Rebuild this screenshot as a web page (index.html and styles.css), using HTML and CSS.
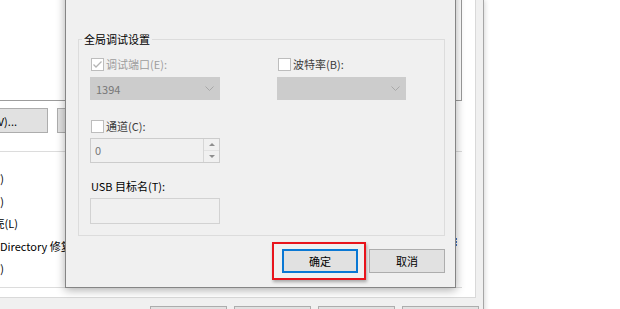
FILE: index.html
```html
<!DOCTYPE html>
<html lang="zh-CN">
<head>
<meta charset="utf-8">
<title>引导高级选项</title>
<link rel="stylesheet" href="styles.css">
</head>
<body>
<div class="screen">
  <div class="propwin">
    <div class="tabpage">
      <div class="tp-main">
        <div class="oslist"></div>
        <div class="optbtns">
          <div class="wbtn adv"><span>高级选项(V)...</span></div>
          <div class="wbtn dflt"></div>
        </div>
        <div class="bootgrp">
          <div class="opt tail w4"><span>安全引导(F)</span></div>
          <div class="opt tail w4"><span>最小(M)</span></div>
          <div class="opt tail w18"><span>其他外壳(L)</span></div>
          <div class="opt split"><span class="pre">Active&nbsp;</span><span>Directory 修复(P)</span></div>
          <div class="opt tail w4"><span>网络(W)</span></div>
        </div>
      </div>
      <div class="tp-side"><span class="dots"></span></div>
    </div>
    <div class="winbtns">
      <div class="wbtn wb"></div>
      <div class="wbtn wb"></div>
      <div class="wbtn wb"></div>
      <div class="wbtn wb"></div>
    </div>
  </div>

  <div class="dialog">
    <fieldset class="grp">
      <legend>全局调试设置</legend>
      <div class="grp-body">
        <label class="chk dis">
          <span class="box"><svg width="11" height="11" viewBox="0 0 11 11"><polyline points="1.5,5.5 4,8 9.5,2.5" fill="none" stroke="#b4b4b4" stroke-width="1.3"/></svg></span>
          <span>调试端口(E):</span>
        </label>
        <label class="chk">
          <span class="box"></span>
          <span>波特率(B):</span>
        </label>
        <div class="combo"><span>1394</span><svg width="9" height="5" viewBox="0 0 9 5"><polyline points="0.5,0.5 4.5,4.5 8.5,0.5" fill="none" stroke="#a8a8a8" stroke-width="1"/></svg></div>
        <div class="combo"><span></span><svg width="9" height="5" viewBox="0 0 9 5"><polyline points="0.5,0.5 4.5,4.5 8.5,0.5" fill="none" stroke="#a8a8a8" stroke-width="1"/></svg></div>
        <label class="chk c1 chan">
          <span class="box"></span>
          <span>通道(C):</span>
        </label>
        <div class="spin c1">
          <span class="val">0</span>
          <span class="ud"><span class="up"><i class="tri-up"></i></span><span class="dn"><i class="tri-dn"></i></span></span>
        </div>
        <div class="lbl c1">USB 目标名(T):</div>
        <div class="edit c1"></div>
      </div>
    </fieldset>
    <div class="dlg-btns">
      <div class="mark"><div class="btn def">确定</div></div>
      <div class="btn">取消</div>
    </div>
  </div>
</div>
</body>
</html>
```

FILE: styles.css
```css
html, body {
  margin: 0;
  padding: 0;
  overflow: hidden;
}
body {
  font-family: "Noto Sans CJK SC", "Noto Sans", sans-serif;
  font-size: 11px;
  color: #000;
}
.screen {
  position: relative;
  width: 620px;
  height: 309px;
  background: #fff;
  overflow: hidden;
}

/* underlying properties window */
.propwin {
  width: 483px;
  height: 340px;
  background: #f0f0f0;
  border-right: 1px solid #a6a6a6;
  box-shadow: 1px 0 5px rgba(0, 0, 0, 0.16);
}
.tabpage {
  display: flex;
  width: 475px;
  height: 297px;
  background: #fff;
  border-right: 1px solid #d9d9d9;
  border-bottom: 1px solid #d9d9d9;
}
.tp-main {
  width: 462px;
  flex: none;
}
.tp-side {
  flex: 1;
  padding-top: 238px;
}
.dots {
  display: block;
  width: 0;
  height: 8px;
  margin-left: -7px;
  border-left: 2px dotted #3d6fc0;
}
.oslist {
  height: 100px;
  border-right: 1px solid #9c9c9c;
  border-bottom: 1px solid #9c9c9c;
}
.optbtns {
  display: flex;
  gap: 9px;
  margin-top: 7px;
}
.wbtn {
  box-sizing: border-box;
  height: 25px;
  border: 1px solid #adadad;
  background: #e1e1e1;
  display: flex;
  align-items: center;
  justify-content: center;
  white-space: nowrap;
  flex: none;
}
.adv {
  width: 100px;
  margin-left: -52px;
  justify-content: flex-end;
  padding-right: 30px;
}
.dflt {
  width: 90px;
}
.bootgrp {
  margin-top: 18px;
  height: 120px;
  padding-top: 15px;
  border-top: 1px solid #dcdcdc;
  border-bottom: 1px solid #dcdcdc;
}
.opt {
  height: 22.5px;
  display: flex;
  align-items: center;
  white-space: nowrap;
}
.opt span {
  flex: none;
}
.opt.tail {
  justify-content: flex-end;
}
.w4 { width: 4px; }
.w18 { width: 18px; }
.opt.split {
  display: grid;
  grid-template-columns: 0 max-content;
  align-items: center;
}
.opt.split .pre {
  justify-self: end;
}
.winbtns {
  display: flex;
  gap: 7px;
  margin-top: 8px;
  padding-left: 150px;
}
.wb {
  width: 77px;
  height: 23px;
}

/* dialog */
.dialog {
  position: absolute;
  left: 65px;
  top: -20px;
  width: 389px;
  background: #f0f0f0;
  border: 1px solid #858585;
  box-shadow: 0 2px 9px rgba(0, 0, 0, 0.33);
}
.grp {
  margin: 50px 10px 0 12px;
  padding: 0 0 11px 0;
  border: 1px solid #dcdcdc;
  min-width: 0;
}
.grp legend {
  margin-left: 3px;
  padding: 0 2px;
  line-height: 17px;
  height: 17px;
}
.grp-body {
  padding-left: 11px;
  display: grid;
  grid-template-columns: 130px 129px;
  column-gap: 57px;
  align-items: start;
}
.c1 {
  grid-column: 1;
}
.chk {
  display: flex;
  align-items: center;
  gap: 2px;
  height: 16px;
  margin-top: 8px;
  padding-left: 1px;
  color: #3c3c3c;
  white-space: nowrap;
}
.chk.dis {
  color: #9d9d9d;
}
.box {
  box-sizing: border-box;
  width: 13px;
  height: 13px;
  border: 1px solid #bdbdbd;
  background: #fff;
  display: flex;
  align-items: center;
  justify-content: center;
}
.combo {
  box-sizing: border-box;
  height: 23px;
  margin-top: 5px;
  border: 1px solid #cccccc;
  background: #cccccc;
  color: #777;
  display: flex;
  align-items: center;
  justify-content: space-between;
  padding: 0 5px 0 5px;
}
.chk.chan {
  margin-top: 18px;
}
.spin {
  box-sizing: border-box;
  height: 25px;
  margin-top: 4px;
  border: 1px solid #cccccc;
  background: #f0f0f0;
  display: flex;
}
.spin .val {
  flex: 1;
  padding-left: 4px;
  line-height: 23px;
  color: #777;
}
.spin .ud {
  width: 15px;
  display: flex;
  flex-direction: column;
  border-left: 1px solid #d6d6d6;
}
.spin .up, .spin .dn {
  flex: 1;
  display: flex;
  align-items: center;
  justify-content: center;
}
.spin .up {
  border-bottom: 1px solid #e2e2e2;
}
.tri-up {
  width: 0;
  height: 0;
  border-left: 3px solid transparent;
  border-right: 3px solid transparent;
  border-bottom: 3px solid #8e8e8e;
}
.tri-dn {
  width: 0;
  height: 0;
  border-left: 3px solid transparent;
  border-right: 3px solid transparent;
  border-top: 3px solid #8e8e8e;
}
.lbl {
  margin-top: 15px;
  line-height: 16px;
  height: 16px;
  padding-left: 1px;
  white-space: nowrap;
}
.edit {
  box-sizing: border-box;
  height: 26px;
  margin-top: 4px;
  border: 1px solid #d2d2d2;
  background: #f0f0f0;
}
.dlg-btns {
  display: flex;
  justify-content: flex-end;
  align-items: center;
  gap: 3px;
  margin: 6px 10px 0 0;
  padding-bottom: 7px;
}
.mark {
  border: 2px solid #e8141c;
  padding: 5px 6px 5px 8px;
  box-shadow: 1px 2px 3px rgba(0, 0, 0, 0.3);
}
.btn {
  box-sizing: border-box;
  width: 76px;
  height: 24px;
  border: 1px solid #adadad;
  background: #e1e1e1;
  display: flex;
  align-items: center;
  justify-content: center;
}
.btn.def {
  border: 2px solid #0a78d4;
}
```
